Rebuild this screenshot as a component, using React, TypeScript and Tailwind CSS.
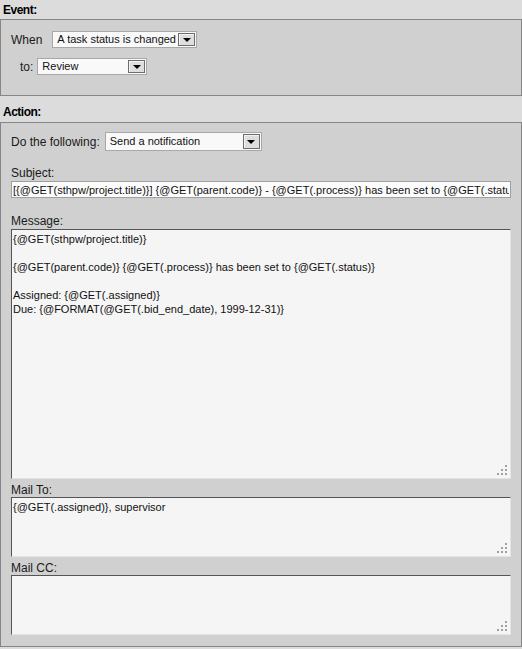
import React from "react";

const font = "font-['Liberation_Sans',Arial,sans-serif]";

function Arrow() {
  return (
    <span className="w-0 h-0 border-x-[4px] border-x-transparent border-t-[4px] border-t-black" />
  );
}

function FakeSelect({ value, className }: { value: string; className: string }) {
  return (
    <div
      className={`flex items-stretch border border-[#a8a8a8] bg-[#f9f9f9] p-px ${className}`}
    >
      <div className="flex-1 flex items-center pl-[3px] text-[11px] text-[#111] whitespace-nowrap overflow-hidden">
        {value}
      </div>
      <div className="w-[17px] flex items-center justify-center border border-[#6c6c6c] bg-[#dedede] shadow-[inset_1px_1px_0_#f4f4f4]">
        <Arrow />
      </div>
    </div>
  );
}

function Grip() {
  return (
    <svg
      className="absolute right-[3px] bottom-[3px]"
      width="11"
      height="11"
      viewBox="0 0 11 11"
    >
      <g fill="#a0a0a0">
        <rect x="8" y="0" width="2" height="2" />
        <rect x="4" y="4" width="2" height="2" />
        <rect x="8" y="4" width="2" height="2" />
        <rect x="0" y="8" width="2" height="2" />
        <rect x="4" y="8" width="2" height="2" />
        <rect x="8" y="8" width="2" height="2" />
      </g>
    </svg>
  );
}

function Area({ value, className }: { value: string; className: string }) {
  return (
    <div className={`relative w-[500px] ${className}`}>
      <textarea
        readOnly
        value={value}
        className={`block w-full h-full resize-none outline-none bg-[#f5f5f5] border border-t-[#555] border-l-[#555] border-r-[#e4e4e4] border-b-[#e4e4e4] px-px pt-[2px] text-[11px] leading-[14px] text-[#111] ${font}`}
      />
      <Grip />
    </div>
  );
}

function Label({ children, className = "" }: { children: React.ReactNode; className?: string }) {
  return (
    <div className={`h-[16px] leading-[16px] text-[12px] text-[#1a1a1a] ${className}`}>
      {children}
    </div>
  );
}

const message = `{@GET(sthpw/project.title)}

{@GET(parent.code)} {@GET(.process)} has been set to {@GET(.status)}

Assigned: {@GET(.assigned)}
Due: {@FORMAT(@GET(.bid_end_date), 1999-12-31)}`;

const subject =
  "[{@GET(sthpw/project.title)}] {@GET(parent.code)} - {@GET(.process)} has been set to {@GET(.status)}";

export default function App() {
  return (
    <div className={`w-[522px] h-[649px] bg-[#dcdcdc] overflow-hidden ${font}`}>
      {/* Event */}
      <div className="h-[19px] pl-[3px] pt-[3px] text-[12px] leading-[14px] font-bold tracking-[-0.5px] text-black">
        Event:
      </div>
      <div className="border border-[#868686] bg-[#d0d0d0] pt-[11px] pb-[20px]">
        <div className="flex items-center pl-[10px] h-[17px]">
          <span className="text-[12px] text-[#1a1a1a]">When</span>
          <FakeSelect value="A task status is changed" className="ml-[10px] w-[145px] h-[17px]" />
        </div>
        <div className="flex items-center pl-[19px] mt-[10px] h-[17px]">
          <span className="text-[12px] text-[#1a1a1a]">to:</span>
          <FakeSelect value="Review" className="ml-[4px] w-[110px] h-[17px]" />
        </div>
      </div>

      {/* Action */}
      <div className="h-[26px] pl-[3px] pt-[9px] text-[12px] leading-[14px] font-bold tracking-[-0.5px] text-black">
        Action:
      </div>
      <div className="border border-[#868686] bg-[#d0d0d0] pl-[10px] pt-[9px] h-[525px]">
        <div className="flex items-center h-[19px]">
          <span className="text-[12px] text-[#1a1a1a]">Do the following:</span>
          <FakeSelect value="Send a notification" className="ml-[5px] w-[157px] h-[19px]" />
        </div>

        <Label className="mt-[14px]">Subject:</Label>
        <input
          readOnly
          value={subject}
          className={`block w-[500px] h-[17px] border border-[#a0a0a0] bg-[#fcfcfc] px-px text-[11px] text-[#111] outline-none ${font}`}
        />

        <Label className="mt-[15px]">Message:</Label>
        <Area value={message} className="h-[250px]" />

        <Label className="mt-[2px] leading-[19px]">Mail To:</Label>
        <Area value="{@GET(.assigned)}, supervisor" className="h-[60px]" />

        <Label className="mt-[2px] leading-[19px]">Mail CC:</Label>
        <Area value="" className="h-[60px]" />
      </div>
    </div>
  );
}
